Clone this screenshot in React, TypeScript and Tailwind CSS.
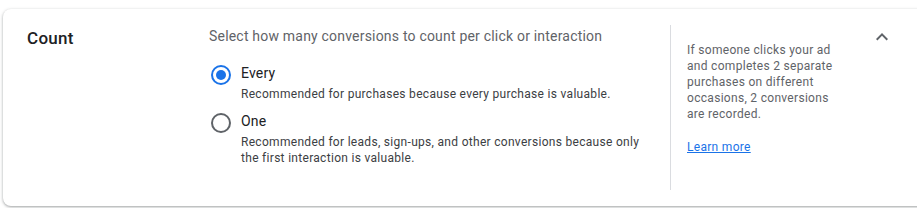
import React from 'react';

const font = { fontFamily: 'Roboto, "Noto Sans", Arial, sans-serif' };

interface RadioOptionProps {
  label: string;
  description: React.ReactNode;
  checked?: boolean;
}

const RadioOption: React.FC<RadioOptionProps> = ({ label, description, checked }) => (
  <div className="flex items-start">
    <div className="mt-[2px] ml-[2px] flex h-5 w-5 items-center justify-center">
      {checked ? (
        <div className="flex h-5 w-5 items-center justify-center rounded-full border-2 border-[#1a73e8]">
          <div className="h-[10px] w-[10px] rounded-full bg-[#1a73e8]" />
        </div>
      ) : (
        <div className="h-5 w-5 rounded-full border-2 border-[#5f6368]" />
      )}
    </div>
    <div className="ml-[10px]">
      <div className="text-[14px] leading-5 tracking-[0.2px] text-[#202124]">{label}</div>
      <div className="mt-[3px] max-w-[405px] text-[12px] leading-4 tracking-[0.3px] text-[#3c4043]">{description}</div>
    </div>
  </div>
);

export default function App() {
  return (
    <div className="h-[208px] w-[917px] overflow-hidden bg-white" style={font}>
      <div className="ml-[3px] mt-[9px] flex h-[197px] w-[930px] rounded-l-lg bg-white shadow-[0_1px_2px_0_rgba(60,64,67,0.3),0_1px_3px_1px_rgba(60,64,67,0.15)]">
        {/* Title */}
        <div className="w-[206px] shrink-0 pl-6 pt-[17px]">
          <h2 className="text-[17px] font-medium leading-6 tracking-[0.3px] text-[#202124]">Count</h2>
        </div>

        {/* Options */}
        <div className="w-[461px] shrink-0 pt-[17px]">
          <p className="text-[14px] leading-5 tracking-[0.2px] text-[#5f6368]">
            Select how many conversions to count per click or interaction
          </p>
          <div className="mt-[17px] flex flex-col gap-[9px]">
            <RadioOption
              checked
              label="Every"
              description="Recommended for purchases because every purchase is valuable."
            />
            <RadioOption
              label="One"
              description="Recommended for leads, sign-ups, and other conversions because only the first interaction is valuable."
            />
          </div>
        </div>

        {/* Help panel */}
        <div className="my-[16px] w-[200px] shrink-0 border-l border-[#dadce0] pl-4 pt-[17px]">
          <p className="w-[156px] text-[12px] leading-4 tracking-[0.3px] text-[#5f6368]">
            If someone clicks your ad and completes 2 separate purchases on different occasions, 2 conversions are recorded.
          </p>
          <a href="#" className="mt-[17px] inline-block text-[12px] leading-4 tracking-[0.3px] text-[#1a73e8] underline">
            Learn more
          </a>
        </div>

        {/* Collapse */}
        <div className="pt-[16px]">
          <svg viewBox="0 0 24 24" className="h-6 w-6 fill-[#5f6368]">
            <path d="M12 8l-6 6 1.41 1.41L12 10.83l4.59 4.58L18 14z" />
          </svg>
        </div>
      </div>
    </div>
  );
}
